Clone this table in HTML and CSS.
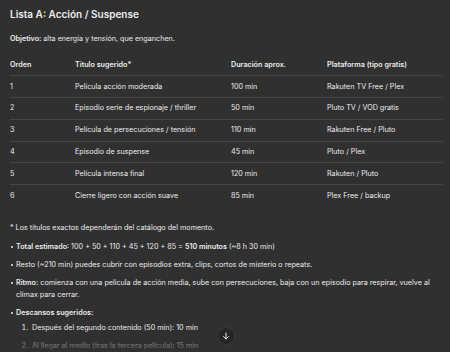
FILE: index.html
```html
<!DOCTYPE html>
<html lang="es">
<head>
<meta charset="utf-8">
<link rel="stylesheet" href="styles.css">
</head>
<body>
<main class="msg">
  <h3 class="title">Lista A: Acción / Suspense</h3>
  <p class="goal"><strong>Objetivo:</strong> alta energía y tensión, que enganchen.</p>
  <table class="tbl">
    <thead>
      <tr><th class="c1">Orden</th><th class="c2">Título sugerido*</th><th class="c3">Duración aprox.</th><th class="c4">Plataforma (tipo gratis)</th></tr>
    </thead>
    <tbody>
      <tr><td>1</td><td>Película acción moderada</td><td>100 min</td><td>Rakuten TV Free / Plex</td></tr>
      <tr><td>2</td><td>Episodio serie de espionaje / thriller</td><td>50 min</td><td>Pluto TV / VOD gratis</td></tr>
      <tr><td>3</td><td>Película de persecuciones / tensión</td><td>110 min</td><td>Rakuten Free / Pluto</td></tr>
      <tr><td>4</td><td>Episodio de suspense</td><td>45 min</td><td>Pluto / Plex</td></tr>
      <tr><td>5</td><td>Película intensa final</td><td>120 min</td><td>Rakuten / Pluto</td></tr>
      <tr><td>6</td><td>Cierre ligero con acción suave</td><td>85 min</td><td>Plex Free / backup</td></tr>
    </tbody>
  </table>
  <p class="note">* Los títulos exactos dependerán del catálogo del momento.</p>
  <ul class="list">
    <li><strong>Total estimado</strong>: 100 + 50 + 110 + 45 + 120 + 85 = <strong>510 minutos</strong> (~8 h 30 min)</li>
    <li>Resto (~210 min) puedes cubrir con episodios extra, clips, cortos de misterio o repeats.</li>
    <li><strong>Ritmo:</strong> comienza con una película de acción media, sube con persecuciones, baja con un episodio para respirar, vuelve al clímax para cerrar.</li>
    <li><strong>Descansos sugeridos:</strong>
      <ol class="sub">
        <li>Después del segundo contenido (50 min): 10 min</li>
        <li>Al llegar al medio (tras la tercera película): 15 min</li>
      </ol>
    </li>
  </ul>
</main>
<div class="fade"></div>
<button class="scroll" aria-label="Bajar">
  <svg width="8" height="8" viewBox="0 0 16 16" fill="none" stroke="#e8e8e8" stroke-width="2" stroke-linecap="round" stroke-linejoin="round"><path d="M8 2v12M3 9l5 5 5-5"/></svg>
</button>
</body>
</html>
```
FILE: styles.css
```css
* { box-sizing: border-box; }
html, body { margin: 0; padding: 0; }
body {
  background: #303030;
  color: #ececec;
  font-family: Inter, "Noto Sans", "Liberation Sans", sans-serif;
  font-size: 7.2px;
  line-height: 12px;
  width: 450px;
  height: 352px;
  overflow: hidden;
  position: relative;
}
.msg { padding: 8px 20px 0 10px; }
.title {
  margin: 0;
  font-size: 10px;
  line-height: 12px;
  font-weight: 600;
}
.goal { margin: 13px 0 0; }
strong { font-weight: 600; }
.tbl {
  margin-top: 9px;
  width: 433px;
  border-collapse: collapse;
}
.tbl th, .tbl td {
  text-align: left;
  padding: 0;
  height: 21.8px;
  vertical-align: middle;
  border-bottom: 1px solid #454545;
  font-weight: 400;
}
.tbl th { font-weight: 600; }
.tbl tbody tr:last-child td { border-bottom: none; }
.c1 { width: 65px; }
.c2 { width: 156px; }
.c3 { width: 96px; }
.note { margin: 15px 0 0; }
.list {
  margin: 7px 0 0;
  padding-left: 6px;
  list-style: none;
}
.list > li {
  position: relative;
  margin-bottom: 6px;
}
.list > li::before {
  content: "";
  position: absolute;
  left: -5px;
  top: 5px;
  width: 2px;
  height: 2px;
  border-radius: 50%;
  background: #ececec;
}
.sub {
  margin: 3px 0 0;
  padding-left: 14px;
}
.sub li { margin-bottom: 6px; padding-left: 2px; }
.fade {
  position: absolute;
  left: 0; right: 0; bottom: 0;
  height: 16px;
  background: linear-gradient(to bottom, rgba(48,48,48,0.35), rgba(48,48,48,0.85));
}
.scroll {
  position: absolute;
  left: 217px;
  top: 327px;
  width: 18px;
  height: 18px;
  border-radius: 50%;
  background: #262626;
  border: 1px solid #3a3a3a;
  padding: 0;
  display: flex;
  align-items: center;
  justify-content: center;
}
```
